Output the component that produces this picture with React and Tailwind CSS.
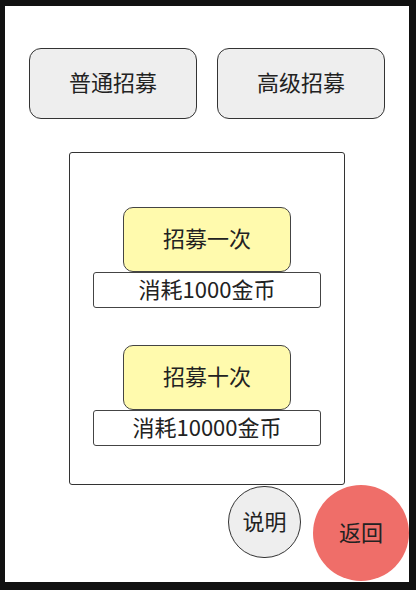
import React from 'react';

const font = { fontFamily: '"Noto Sans CJK SC", "Noto Sans", sans-serif' };

function TabButton({ label }) {
  return (
    <button className="w-[168px] h-[71px] pb-[4px] rounded-[12px] border border-[#333] bg-[#eeeeee] text-[22px] text-[#222]">
      {label}
    </button>
  );
}

function RecruitOption({ label, cost }) {
  return (
    <div className="flex flex-col items-center">
      <button className="w-[168px] h-[65px] pb-[4px] rounded-[10px] border border-[#444] bg-[#fffaad] text-[22px] text-[#222]">
        {label}
      </button>
      <div className="w-[228px] h-[36px] pb-[4px] rounded-[3px] border border-[#444] bg-white flex items-center justify-center text-[22px] text-[#222]">
        {cost}
      </div>
    </div>
  );
}

export default function App() {
  return (
    <div className="w-[416px] h-[590px] bg-[#111] pt-[6px] pl-[5px] pr-[7px] pb-[8px]" style={font}>
      <div className="w-full h-full bg-white flex flex-col items-center">
        {/* tabs */}
        <div className="flex gap-5 mt-[42px]">
          <TabButton label="普通招募" />
          <TabButton label="高级招募" />
        </div>

        {/* recruit panel */}
        <div className="w-[276px] h-[333px] mt-[33px] rounded-[3px] border border-[#333] flex flex-col items-center pt-[54px] gap-[37px]">
          <RecruitOption label="招募一次" cost="消耗1000金币" />
          <RecruitOption label="招募十次" cost="消耗10000金币" />
        </div>

        <div className="w-full flex justify-end items-start gap-3">
          <button className="w-[73px] h-[72px] mt-[1px] pb-[4px] rounded-full border border-[#333] bg-[#eeeeee] text-[22px] text-[#222]">
            说明
          </button>
          <button className="w-[96px] h-[96px] pb-[4px] rounded-full bg-[#ef6e69] text-[22px] text-[#222]">
            返回
          </button>
        </div>
      </div>
    </div>
  );
}
